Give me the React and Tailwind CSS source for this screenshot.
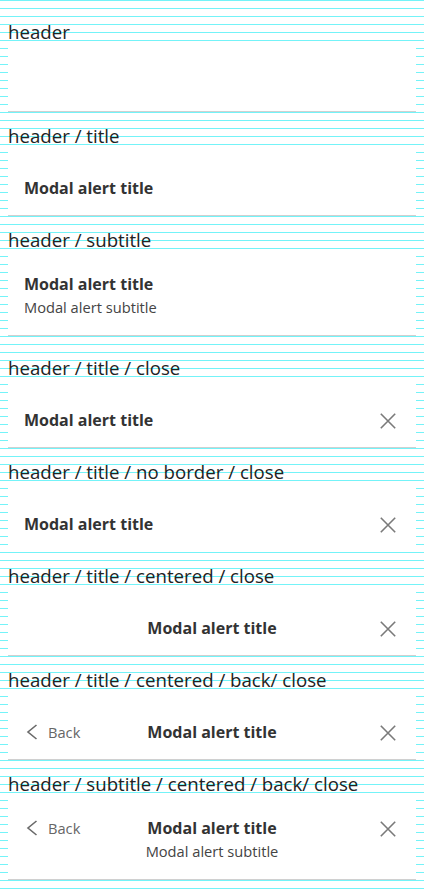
import React from 'react';

const font = { fontFamily: '"Open Sans", "Noto Sans", sans-serif' };

function CloseIcon() {
    return (
        <svg width="16" height="16" viewBox="0 0 16 16" className="block">
            <path d="M0.8 0.8 L15.2 15.2 M15.2 0.8 L0.8 15.2" stroke="#7a7a7a" strokeWidth="1.6" fill="none" />
        </svg>
    );
}

function Back() {
    return (
        <div className="flex items-center gap-[10px] text-[14.67px] leading-5 text-[#666]">
            <svg width="12" height="16" viewBox="0 0 12 16" className="block">
                <path d="M10.5 1 L2 8 L10.5 15" stroke="#6a6a6a" strokeWidth="1.6" fill="none" />
            </svg>
            <span>Back</span>
        </div>
    );
}

function Label({ children, first, extra }) {
    return (
        <div className={`${first ? 'mt-5' : extra ? 'mt-5' : 'mt-3'} mb-1 h-6 px-2 text-[18.67px] leading-6 text-[#222]`}>
            {children}
        </div>
    );
}

function Card({ children, border = true, className = '' }) {
    return (
        <div className={`mx-2 bg-white ${border ? 'border-b border-[#d0d0d0]' : ''} ${className}`}>
            {children}
        </div>
    );
}

const Title = ({ children }) => (
    <div className="text-base font-bold leading-6 text-[#333]">{children}</div>
);

const Subtitle = ({ children }) => (
    <div className="text-[14.67px] leading-[22px] text-[#444]">{children}</div>
);

const Close = () => (
    <div className="flex justify-end pt-[5px] pr-1"><CloseIcon /></div>
);

export default function App() {
    return (
        <div
            style={font}
            className="min-h-screen w-full overflow-hidden bg-[image:repeating-linear-gradient(to_bottom,#74f3f8_0px,#74f3f8_1px,transparent_1px,transparent_8px)] pb-4"
        >
            <Label first>header</Label>
            <Card className="h-16" />

            <Label>header / title</Label>
            <Card className="h-16 px-4 pt-6">
                <Title>Modal alert title</Title>
            </Card>

            <Label>header / subtitle</Label>
            <Card className="h-20 px-4 pt-4">
                <Title>Modal alert title</Title>
                <Subtitle>Modal alert subtitle</Subtitle>
            </Card>

            <Label extra>header / title / close</Label>
            <Card className="flex h-16 items-start justify-between px-4 pt-6">
                <Title>Modal alert title</Title>
                <Close />
            </Card>

            <Label>header / title / no border / close</Label>
            <Card border={false} className="flex h-16 items-start justify-between px-4 pt-6">
                <Title>Modal alert title</Title>
                <Close />
            </Card>

            <Label>header / title / centered / close</Label>
            <Card className="grid h-16 grid-cols-[1fr_auto_1fr] items-start px-4 pt-6">
                <div />
                <Title>Modal alert title</Title>
                <Close />
            </Card>

            <Label>header / title / centered / back/ close</Label>
            <Card className="grid h-16 grid-cols-[1fr_auto_1fr] items-start px-4 pt-6">
                <div className="pt-[2px] pl-[2px]"><Back /></div>
                <Title>Modal alert title</Title>
                <Close />
            </Card>

            <Label>header / subtitle / centered / back/ close</Label>
            <Card className="grid h-20 grid-cols-[1fr_auto_1fr] items-start px-4 pt-4">
                <div className="pt-[2px] pl-[2px]"><Back /></div>
                <div className="text-center">
                    <Title>Modal alert title</Title>
                    <Subtitle>Modal alert subtitle</Subtitle>
                </div>
                <Close />
            </Card>
        </div>
    );
}
